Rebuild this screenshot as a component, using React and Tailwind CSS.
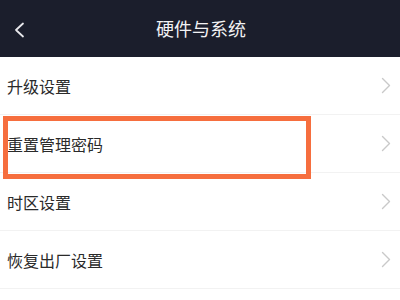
import React from 'react';

const items = ['升级设置', '重置管理密码', '时区设置', '恢复出厂设置'];

const Chevron = () => (
  <svg width="10" height="17" viewBox="0 0 10 17" fill="none">
    <path d="M1.5 1.5 L8.5 8.5 L1.5 15.5" stroke="#c9c9c9" strokeWidth="1.4" strokeLinecap="round" strokeLinejoin="round" />
  </svg>
);

const App = () => {
  return (
    <div
      className="relative w-[400px] h-[300px] bg-white overflow-hidden"
      style={{ fontFamily: '"Noto Sans CJK SC", "Noto Sans", sans-serif' }}
    >
      <div className="relative h-[57px] bg-[#1b1e2c] flex items-center justify-center">
        <svg className="absolute left-[14px] top-[22px]" width="11" height="16" viewBox="0 0 11 16" fill="none">
          <path d="M9 1.5 L2 8 L9 14.5" stroke="#e8e8ec" strokeWidth="1.8" strokeLinecap="round" strokeLinejoin="round" />
        </svg>
        <span className="text-[18px] text-[#f2f2f4] ml-[2px]">硬件与系统</span>
      </div>

      <div className="flex flex-col">
        {items.map((item) => (
          <div key={item} className="h-[58px] flex items-center justify-between pl-[7px] pr-[9px] border-b border-[#f2f2f2]">
            <span className="text-[16px] text-[#2a2a2a]">{item}</span>
            <Chevron />
          </div>
        ))}
      </div>

      <div className="absolute left-[3px] top-[116px] w-[308px] h-[63px] border-[5px] border-[#f66e3e]" />
    </div>
  );
};

export default App;
